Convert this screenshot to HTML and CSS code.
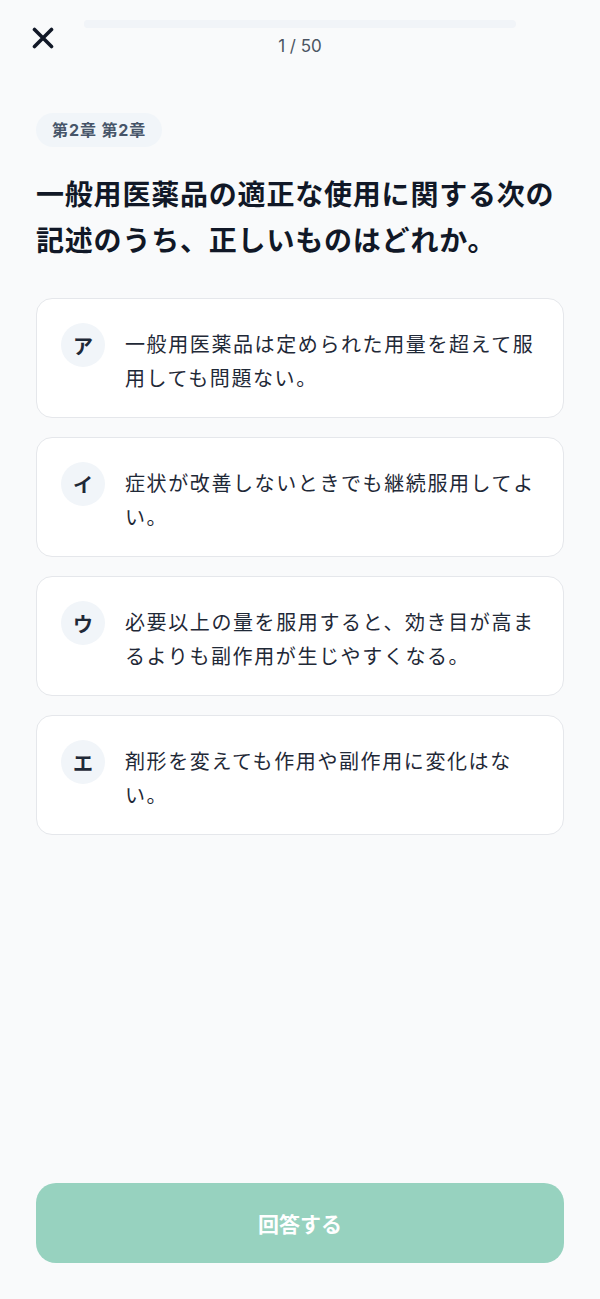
FILE: index.html
```html
<!DOCTYPE html>
<html lang="ja">
<head>
<meta charset="utf-8">
<title>Quiz</title>
<link rel="stylesheet" href="styles.css">
</head>
<body>
<div class="screen">
  <header class="topbar">
    <button class="close" aria-label="閉じる">
      <svg width="22" height="22" viewBox="0 0 22 22"><path d="M2.5 2.5 L19.5 19.5 M19.5 2.5 L2.5 19.5" stroke="#111827" stroke-width="3.6" stroke-linecap="round" fill="none"/></svg>
    </button>
    <div class="progress-wrap">
      <div class="progress"><div class="progress-fill" style="width:2%"></div></div>
      <div class="counter">1 / 50</div>
    </div>
  </header>

  <main class="content">
    <span class="badge">第2章 第2章</span>
    <h1 class="question">一般用医薬品の適正な使用に関する次の記述のうち、正しいものはどれか。</h1>

    <ul class="options">
      <li class="option"><span class="mark">ア</span><span class="text">一般用医薬品は定められた用量を超えて服用しても問題ない。</span></li>
      <li class="option"><span class="mark">イ</span><span class="text">症状が改善しないときでも継続服用してよい。</span></li>
      <li class="option"><span class="mark">ウ</span><span class="text">必要以上の量を服用すると、効き目が高まるよりも副作用が生じやすくなる。</span></li>
      <li class="option"><span class="mark">エ</span><span class="text">剤形を変えても作用や副作用に変化はない。</span></li>
    </ul>
  </main>

  <footer class="footer">
    <button class="submit">回答する</button>
  </footer>
</div>
</body>
</html>
```

FILE: styles.css
```css
* { box-sizing: border-box; }
html, body { margin: 0; padding: 0; }
body {
  background: #f9fafb;
  font-family: "Inter", "Noto Sans CJK JP", sans-serif;
  color: #111827;
}
.screen {
  width: 600px;
  height: 1299px;
  display: flex;
  flex-direction: column;
}
.topbar {
  display: flex;
  align-items: flex-start;
  padding: 20px 84px 0 32px;
  height: 70px;
}
.close {
  border: 0;
  background: none;
  padding: 0;
  margin-top: 7px;
  width: 22px;
  height: 22px;
  display: flex;
}
.progress-wrap {
  flex: 1;
  margin-left: 30px;
  display: flex;
  flex-direction: column;
  align-items: center;
}
.progress {
  width: 100%;
  height: 8px;
  border-radius: 4px;
  background: #f1f4f8;
  overflow: hidden;
}
.progress-fill {
  height: 100%;
  background: #f1f4f8;
}
.counter {
  margin-top: 8px;
  font-size: 17px;
  line-height: 20px;
  color: #4b5563;
}
.content {
  flex: 1;
  padding: 43px 36px 0;
}
.badge {
  display: inline-block;
  background: #f1f5f9;
  color: #475569;
  font-weight: 700;
  font-size: 16px;
  letter-spacing: 0.9px;
  line-height: 34px;
  height: 34px;
  padding: 0 16px;
  border-radius: 17px;
}
.question {
  margin: 25px 0 34px;
  font-size: 28px;
  line-height: 46px;
  font-weight: 700;
  color: #111827;
  letter-spacing: 0.8px;
}
.options {
  list-style: none;
  margin: 0;
  padding: 0;
  display: flex;
  flex-direction: column;
  gap: 19px;
}
.option {
  display: flex;
  align-items: flex-start;
  gap: 20px;
  background: #ffffff;
  border: 1px solid #e5e7eb;
  border-radius: 16px;
  padding: 24px 24px 21px;
}
.mark {
  flex: none;
  width: 44px;
  height: 44px;
  border-radius: 50%;
  background: #f1f5f9;
  color: #1f2937;
  font-weight: 700;
  font-size: 20px;
  display: flex;
  align-items: center;
  justify-content: center;
}
.text {
  margin-top: 5px;
  font-size: 20px;
  line-height: 34px;
  letter-spacing: 1.6px;
  color: #1f2937;
}
.footer {
  padding: 0 36px 36px;
}
.submit {
  width: 100%;
  height: 80px;
  border: 0;
  border-radius: 20px;
  background: #97d2bf;
  color: #ffffff;
  font-family: "Inter", "Noto Sans CJK JP", sans-serif;
  font-weight: 700;
  font-size: 21px;
}
```
